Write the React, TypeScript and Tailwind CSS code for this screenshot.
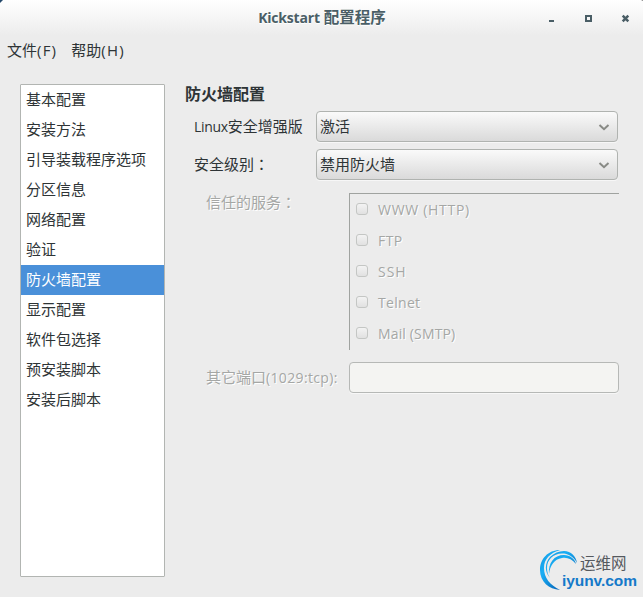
import React from "react";

const sections = [
  "基本配置", "安装方法", "引导装载程序选项", "分区信息", "网络配置", "验证",
  "防火墙配置", "显示配置", "软件包选择", "预安装脚本", "安装后脚本",
];

const services = [
  { name: "WWW (HTTP)", spacing: "tracking-[0.7px]" },
  { name: "FTP", spacing: "tracking-[0.4px]" },
  { name: "SSH", spacing: "tracking-[1px]" },
  { name: "Telnet", spacing: "tracking-[0.3px]" },
  { name: "Mail (SMTP)", spacing: "tracking-[0.15px]" },
];

function TitleBar() {
  return (
    <header className="grid h-9 grid-cols-[1fr_auto_1fr] items-center bg-linear-to-b from-white to-[#ececec] text-[#4a5e66]">
      <span />
      <h1 className="h-9 pl-px text-[14px] leading-[34px] font-bold [text-shadow:0_1px_0_#fff]">
        <span className="tracking-[-0.2px]">Kickstart</span>
        <span className="ml-1 text-[15.5px]">配置程序</span>
      </h1>
      <svg className="h-9 w-[103px] justify-self-end" viewBox="0 0 103 36" shapeRendering="crispEdges">
        <path d="M9 20h5v2H9z" fill="#4a5e66" />
        <path d="M46 16h5v5h-5z" fill="none" stroke="#4a5e66" strokeWidth="2" />
        <path d="M82.7 15.7l5.6 5.6M88.3 15.7l-5.6 5.6" stroke="#4a5e66" strokeWidth="2.5" shapeRendering="auto" />
      </svg>
    </header>
  );
}

function Select({ value }: { value: string }) {
  return (
    <button className="flex h-[31px] w-[302px] items-center justify-between rounded-[4px] border border-[#b0b3b0] bg-linear-to-b from-[#fafafa] to-[#dadada] pr-[7px] pl-[3px] shadow-[0_1px_0_#f7f7f7]">
      <span className="-mt-[2px]">{value}</span>
      <svg className="h-3 w-3" viewBox="0 0 12 12">
        <path d="M1.5 4L6 8.2 10.5 4" fill="none" stroke="#888a85" strokeWidth="2" />
      </svg>
    </button>
  );
}

function Colon() {
  return <span className="font-['Noto_Sans_CJK_TC',sans-serif]" lang="zh-Hant">：</span>;
}

function Watermark() {
  return (
    <div className="absolute top-[547px] left-[537px] h-[46px] w-[106px]">
      <svg className="h-full w-full" viewBox="0 0 106 46">
        <defs>
          <linearGradient id="swoosh" x1="0" y1="0" x2="1" y2="1">
            <stop offset="0" stopColor="#1593dc" />
            <stop offset=".35" stopColor="#18aef5" />
            <stop offset="1" stopColor="#0660b4" />
          </linearGradient>
        </defs>
        <path d="M23 3C11 3 3 12 3 23c0 12 9 19 20 20C13 38 7 31 7 21 7 12 13 6 23 3Z" fill="url(#swoosh)" />
        <path d="M13 31C7 24 8 16 13 10c4-4 9-6 14-6 7 0 12 5 13 12C36 9 31 6.500 25 6.500 16 6.500 10 13 10 21c0 4 1 7 3 10Z" fill="url(#swoosh)" />
        <path d="M12 27C11 16 17 8 27 8c6 0 11 4 12 9-4-5-9-7-14-6-8 1-12 8-13 16Z" fill="url(#swoosh)" />
        <text x="43" y="22" fontFamily="Noto Sans CJK SC, sans-serif" fontSize="15.5" fill="#55595e">运维网</text>
        <text x="25" y="38.500" fontFamily="Liberation Sans, sans-serif" fontWeight="700" fontSize="15.5" textLength="75" fill="#1479c9">iyunv.com</text>
      </svg>
    </div>
  );
}

export default function App() {
  return (
    <div className="relative h-[597px] w-[643px] overflow-hidden bg-[#ececec] font-['Open_Sans','Noto_Sans_CJK_SC',sans-serif] text-[15px] leading-[30px] whitespace-nowrap text-[#2e3436]">
      <TitleBar />
      <nav className="flex h-[48px] gap-[14px] pl-[7px] leading-[28px]">
        <span>文件<span className="tracking-[1.2px]">(F)</span></span>
        <span>帮助<span className="tracking-[1.3px]">(H)</span></span>
      </nav>
      <main className="flex pl-5">
        <ul className="h-[493px] w-[145px] rounded-[1px] border border-[#b2b5b2] bg-white">
          {sections.map((name, index) => (
            <li key={name} className={index === 6 ? "h-[30px] bg-[#4a90d9] pl-[5px] leading-[28px] text-white" : "h-[30px] pl-[5px] leading-[28px]"}>
              {name}
            </li>
          ))}
        </ul>
        <section className="ml-5">
          <h2 className="h-[27px] text-[16px] leading-[21px] font-bold">防火墙配置</h2>
          <div className="ml-[9px] flex flex-col gap-[7px]">
            <div className="flex h-[31px]">
              <span className="w-[122px]"><span className="text-[14px] tracking-[-0.3px]">Linux</span>安全增强版</span>
              <Select value="激活" />
            </div>
            <div className="flex h-[31px]">
              <span className="w-[122px]">安全级别<Colon /></span>
              <Select value="禁用防火墙" />
            </div>
          </div>
          <div className="mt-[13px] ml-[21px] flex text-[#a5a7a5] [text-shadow:1px_1px_0_#fff]">
            <span className="-mt-[6px] w-[143px]">信任的服务<Colon /></span>
            <div className="h-[157px] w-[270px] border-t border-l border-[#a0a3a0]">
              {services.map(({ name, spacing }) => (
                <label key={name} className="flex h-[31px] items-center pl-[6px] text-[14px]">
                  <span className="-mt-[2px] mr-[10px] h-3 w-3 rounded-[3px] border border-[#c4c6c4] bg-linear-to-b from-[#f3f3f3] to-[#e1e1e1]" />
                  <span className={spacing}>{name}</span>
                </label>
              ))}
            </div>
          </div>
          <div className="mt-3 ml-[21px] flex text-[#a5a7a5] [text-shadow:1px_1px_0_#fff]">
            <span className="w-[143px]">其它端口<span className="text-[14px] tracking-[0.35px]">(1029:tcp):</span></span>
            <input disabled aria-label="其它端口" className="h-[31px] w-[270px] rounded-[4px] border border-[#b6b8b6] bg-[#f4f4f2] shadow-[0_1px_0_#f7f7f7]" />
          </div>
        </section>
      </main>
      <Watermark />
      <svg className="absolute top-0 left-0 h-1 w-full" viewBox="0 0 643 4">
        <path d="M0 0h3L0 3z" fill="#24486b" />
        <path d="M641 0h2v1z" fill="#777" />
      </svg>
    </div>
  );
}
